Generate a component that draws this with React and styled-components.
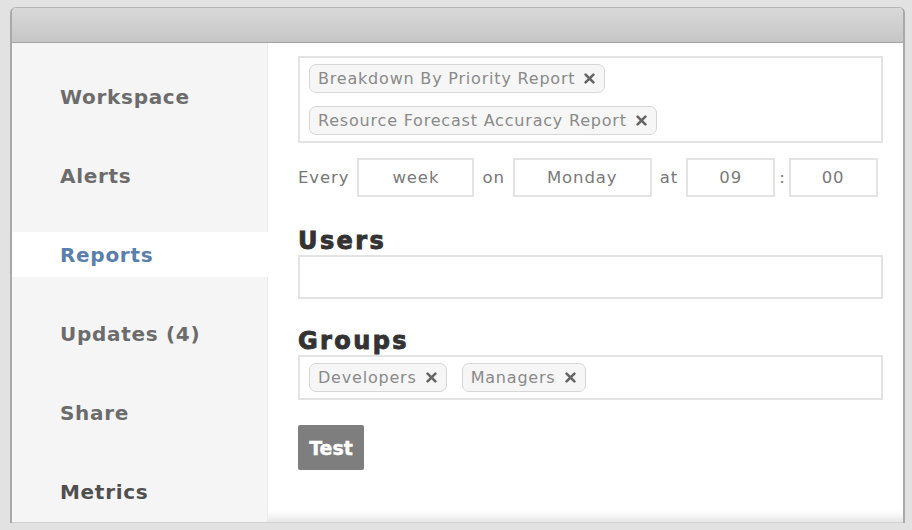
import React from 'react'
import styled, { createGlobalStyle } from 'styled-components'

const GlobalStyle = createGlobalStyle`
    html, body {
        margin: 0;
        padding: 0;
        background: #e2e2e2;
    }
    body {
        font-family: "DejaVu Sans", Verdana, sans-serif;
    }
`

const navItems = [
    { label: 'Workspace' },
    { label: 'Alerts' },
    { label: 'Reports', active: true },
    { label: 'Updates (4)' },
    { label: 'Share' },
    { label: 'Metrics', dark: true },
]

const CloseIcon = () => (
    <svg width="11" height="11" viewBox="0 0 11 11">
        <path d="M1.6 1.6 L9.4 9.4 M9.4 1.6 L1.6 9.4" stroke="#666" strokeWidth="2.6" strokeLinecap="round" />
    </svg>
)

const Tag = ({ children }) => (
    <TagPill>
        {children}
        <CloseIcon />
    </TagPill>
)

const App = () => {
    return (
        <Page>
            <GlobalStyle />
            <Window>
                <TitleBar />
                <Body>
                    <Sidebar>
                        {navItems.map(item => (
                            <NavItem key={item.label} $active={item.active} $dark={item.dark}>
                                {item.label}
                            </NavItem>
                        ))}
                    </Sidebar>
                    <Main>
                        <TagBox $stack>
                            <Tag>Breakdown By Priority Report</Tag>
                            <Tag>Resource Forecast Accuracy Report</Tag>
                        </TagBox>
                        <ScheduleRow>
                            <Label>Every</Label>
                            <Field $w={117}>week</Field>
                            <Label>on</Label>
                            <Field $w={139}>Monday</Field>
                            <Label>at</Label>
                            <Field $w={89}>09</Field>
                            <Colon>:</Colon>
                            <Field $w={89}>00</Field>
                        </ScheduleRow>
                        <Heading $top={31}>Users</Heading>
                        <EmptyBox />
                        <Heading $top={29}>Groups</Heading>
                        <TagBox>
                            <Tag>Developers</Tag>
                            <Tag>Managers</Tag>
                        </TagBox>
                        <TestButton>Test</TestButton>
                    </Main>
                </Body>
            </Window>
        </Page>
    )
}

export default App

const Page = styled.div`
    width: 912px;
    height: 530px;
    padding: 7px 7px 0 10px;
    box-sizing: border-box;
    overflow: hidden;
    background: #e2e2e2;
`
const Window = styled.div`
    width: 895px;
    border-left: 2px solid #a9a9a9;
    border-right: 2px solid #a9a9a9;
    border-top: 1px solid #b5b5b5;
    border-radius: 6px 6px 0 0;
    box-sizing: border-box;
    overflow: hidden;
    background: #fff;
`
const TitleBar = styled.div`
    height: 34px;
    background: linear-gradient(#d9d9d9, #c6c6c6);
    border-bottom: 1px solid #a3a3a3;
`
const Body = styled.div`
    display: flex;
    height: 480px;
    box-shadow: inset 0 -12px 10px -8px rgba(0, 0, 0, 0.12);
    border-bottom: 1px solid #d0d0d0;
    box-sizing: border-box;
`
const Sidebar = styled.div`
    width: 256px;
    flex-shrink: 0;
    box-sizing: border-box;
    background: #f5f5f5;
    border-right: 1px solid #ebebeb;
    padding-top: 31px;
    display: flex;
    flex-direction: column;
    gap: 34px;
`
const NavItem = styled.div`
    height: 45px;
    display: flex;
    align-items: center;
    padding-left: 48px;
    margin-right: ${p => (p.$active ? '-1px' : '0')};
    background: ${p => (p.$active ? '#fff' : 'transparent')};
    color: ${p => (p.$active ? '#5a7fab' : p.$dark ? '#4f4f4f' : '#6c6c6c')};
    font-size: 20px;
    font-weight: bold;
    letter-spacing: 0.7px;
`
const Main = styled.div`
    flex: 1;
    padding: 13px 20px 0 30px;
    display: flex;
    flex-direction: column;
    align-items: flex-start;
`
const TagBox = styled.div`
    width: 585px;
    box-sizing: border-box;
    border: 2px solid #e3e3e3;
    padding: 6px 9px;
    display: flex;
    flex-direction: ${p => (p.$stack ? 'column' : 'row')};
    align-items: flex-start;
    gap: ${p => (p.$stack ? '13px' : '15px')};
`
const TagPill = styled.span`
    height: 29px;
    box-sizing: border-box;
    display: inline-flex;
    align-items: center;
    gap: 9px;
    padding: 0 9px 0 8px;
    border: 1px solid #d6d6d6;
    border-radius: 7px;
    background: #f6f6f6;
    color: #8a8a8a;
    font-size: 16px;
    letter-spacing: 0.8px;
`
const ScheduleRow = styled.div`
    display: flex;
    align-items: center;
    gap: 8px;
    margin-top: 15px;
    color: #777;
    font-size: 16.5px;
    letter-spacing: 0.9px;
`
const Label = styled.span``
const Colon = styled.span`
    margin: 0 -5px 0 -4px;
`
const Field = styled.div`
    width: ${p => p.$w}px;
    height: 39px;
    box-sizing: border-box;
    border: 2px solid #e3e3e3;
    display: flex;
    align-items: center;
    justify-content: center;
    color: #7a7a7a;
`
const Heading = styled.h2`
    margin: ${p => p.$top}px 0 1px;
    line-height: 26px;
    font-size: 24px;
    font-weight: bold;
    letter-spacing: 2.4px;
    color: #333;
    -webkit-text-stroke: 0.9px #333;
`
const EmptyBox = styled.div`
    width: 585px;
    height: 44px;
    box-sizing: border-box;
    border: 2px solid #e3e3e3;
`
const TestButton = styled.button`
    margin-top: 25px;
    width: 66px;
    height: 45px;
    border: none;
    border-radius: 2px;
    background: #7e7e7e;
    color: #fff;
    font-family: "DejaVu Sans", sans-serif;
    font-size: 19px;
    font-weight: bold;
    padding: 0;
    -webkit-text-stroke: 0.4px #fff;
`
